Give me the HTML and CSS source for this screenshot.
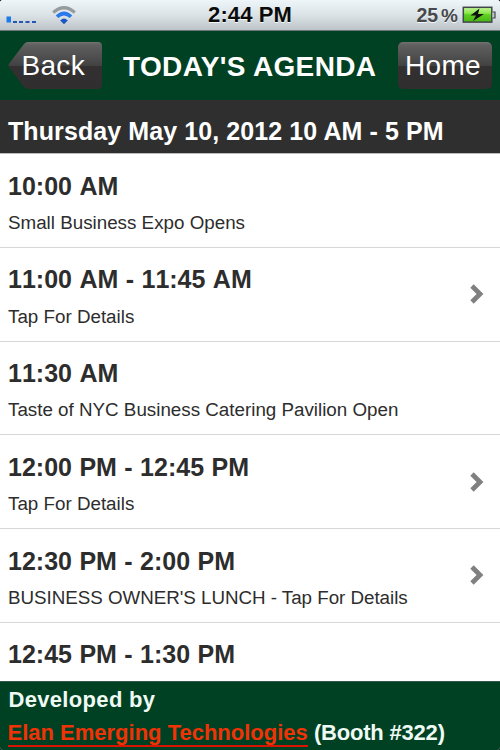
FILE: index.html
```html
<!DOCTYPE html>
<html lang="en">
<head>
<meta charset="utf-8">
<title>Today's Agenda</title>
<link rel="stylesheet" href="styles.css">
</head>
<body>
<div class="phone">
  <div class="status">
    <svg class="radio" width="80" height="30" viewBox="0 0 80 30" aria-hidden="true">
      <rect x="6.5" y="16.5" width="4.5" height="6" fill="#1b7be8"/>
      <path d="M13 22h4M19 22h4M25.5 22h4M32 22h4" stroke="#2457b5" stroke-width="1.8"/>
      <path d="M53.2 12.5Q64 3 74.8 12.5" fill="none" stroke="#969b9e" stroke-width="3.2"/>
      <path d="M57 16.8Q64 10.2 71 16.8" fill="none" stroke="#2a78ea" stroke-width="3.6"/>
      <path d="M60.2 20.5Q64 16.6 67.8 20.5L64 24.3z" fill="#1c56c4"/>
    </svg>
    <div class="clock">2:44 PM</div>
    <div class="power">
      <span class="percent">25<i>%</i></span>
      <svg width="39" height="20" viewBox="0 0 39 20" aria-hidden="true">
        <defs><linearGradient id="charge" x1="0" y1="0" x2="0" y2="1"><stop offset="0" stop-color="#c4f59a"/><stop offset=".4" stop-color="#8be84c"/><stop offset=".5" stop-color="#5fd021"/><stop offset="1" stop-color="#48b514"/></linearGradient></defs>
        <rect x="2.3" y="2.3" width="28.5" height="14.8" fill="url(#charge)" stroke="#41464b" stroke-width="1.5"/>
        <path d="M31.5 7h2.5v6H31.5" fill="#bfc5c8" stroke="#41464b" stroke-width="1.2"/>
        <path d="M18.5 3.5L9.5 10.5H15L12 16L23 9H17z" fill="#111"/>
      </svg>
    </div>
  </div>
  <header class="bar">
    <div class="back"><svg width="95" height="47" viewBox="0 0 95 47" aria-hidden="true">
      <defs><linearGradient id="gloss" x1="0" y1="0" x2="0" y2="1"><stop offset="0" stop-color="#727272"/><stop offset=".06" stop-color="#606060"/><stop offset=".5" stop-color="#424242"/><stop offset=".51" stop-color="#323030"/><stop offset="1" stop-color="#302e2e"/></linearGradient></defs>
      <path d="M20 0H90Q94 0 94 4V43Q94 47 90 47H20Q17.5 47 16 45L1.5 26Q-.5 23.5 1.5 21L16 2Q17.5 0 20 0Z" fill="url(#gloss)"/>
    </svg><span>Back</span></div>
    <h1><span>TODAY'S AGENDA</span></h1>
    <div class="home"><span>Home</span></div>
  </header>
  <div class="date"><span>Thursday May 10, 2012 10 AM - 5 PM</span></div>
  <main class="list">
    <section class="row"><div><h2><span>10:00 AM</span></h2><p><span>Small Business Expo Opens</span></p></div></section>
    <section class="row"><div><h2><span>11:00 AM - 11:45 AM</span></h2><p><span>Tap For Details</span></p></div><svg class="chevron" viewBox="0 0 14 20"><path d="M2 2L10 10L2 18"/></svg></section>
    <section class="row"><div><h2><span>11:30 AM</span></h2><p><span>Taste of NYC Business Catering Pavilion Open</span></p></div></section>
    <section class="row"><div><h2><span>12:00 PM - 12:45 PM</span></h2><p><span>Tap For Details</span></p></div><svg class="chevron" viewBox="0 0 14 20"><path d="M2 2L10 10L2 18"/></svg></section>
    <section class="row"><div><h2><span>12:30 PM - 2:00 PM</span></h2><p class="wide"><span>BUSINESS OWNER'S LUNCH - Tap For Details</span></p></div><svg class="chevron" viewBox="0 0 14 20"><path d="M2 2L10 10L2 18"/></svg></section>
    <section class="row"><div><h2><span>12:45 PM - 1:30 PM</span></h2></div></section>
  </main>
  <footer class="credit">
    <div class="by">Developed by</div>
    <div><a>Elan Emerging Technologies</a> <span>(Booth #322)</span></div>
  </footer>
</div>
</body>
</html>
```
FILE: styles.css
```css
* { box-sizing: border-box; }
body { margin: 0; background: #000; font-family: "Liberation Sans", Arial, sans-serif; }
h1, h2, p { margin: 0; }
.phone { width: 500px; height: 750px; overflow: hidden; border-radius: 3px; display: flex; flex-direction: column; background: #fff; white-space: nowrap; }

.status { height: 31px; flex: none; display: grid; grid-template-columns: 1fr auto 1fr; background: linear-gradient(#eff6fa, #dce3e7 50%, #bdc4c8); border-bottom: 1px solid #69777a; }
.clock { font-weight: bold; font-size: 22px; line-height: 30px; letter-spacing: .1px; color: #0b0b0b; text-shadow: 0 1px 0 #f4f7f8; }
.power { display: flex; justify-content: flex-end; padding: 5px 0 0; }
.percent { font-weight: bold; font-size: 19.5px; line-height: 21px; color: #46494c; text-shadow: 0 1px 0 #f4f7f8; margin-right: 3px; }
.percent i { font-style: normal; font-size: 19px; margin-left: 3px; }

.bar { height: 69px; flex: none; display: flex; background: #004023; color: #fff; padding: 11px 8px 0; }
.back { position: relative; width: 94px; height: 47px; }
.back span { position: absolute; left: 13.5px; top: 0; font-size: 28px; letter-spacing: .3px; line-height: 48px; }
.bar h1 { width: 296px; padding-left: 21px; font-size: 28px; line-height: 50px; letter-spacing: .36px; }
.home { width: 94px; height: 47px; border-radius: 5px; padding-left: 7px; font-size: 28px; letter-spacing: .3px; line-height: 48px; background: linear-gradient(#727272, #606060 6%, #424242 50%, #323030 51%, #302e2e); }

.date { height: 53px; flex: none; padding-left: 8px; background: #302f2f; color: #fff; font-weight: bold; font-size: 25px; line-height: 62px; letter-spacing: .09px; }
.list { height: 528px; flex: 1; min-height: 0; overflow: hidden; border-top: 1px solid #bdbdbd; }
.row { height: 93.75px; display: flex; justify-content: space-between; align-items: center; padding: 0 16px 0 8px; border-bottom: 1px solid #d8d8d8; color: #2d2d2d; }
.row > div { height: 100%; padding-top: 15.5px; }
.row h2 { font-size: 25px; line-height: 32px; font-kerning: none; word-spacing: .5px; }
.row p { font-size: 18.8px; line-height: 24px; margin-top: 9.3px; }
.row .wide { letter-spacing: -.03px; }
.chevron { width: 14px; height: 20px; fill: none; stroke: #808080; stroke-width: 4.8; }

.credit { height: 69px; flex: none; padding: 1px 8px 0 7.5px; background: #004023; border-top: 1px solid #35584a; color: #effaf3; font-weight: bold; font-size: 22px; line-height: 33px; }
.credit .by { letter-spacing: .32px; padding-left: 1px; }
.credit a { color: #f03306; border-bottom: 2px solid #d91400; }
.credit span { letter-spacing: -.2px; }
```
